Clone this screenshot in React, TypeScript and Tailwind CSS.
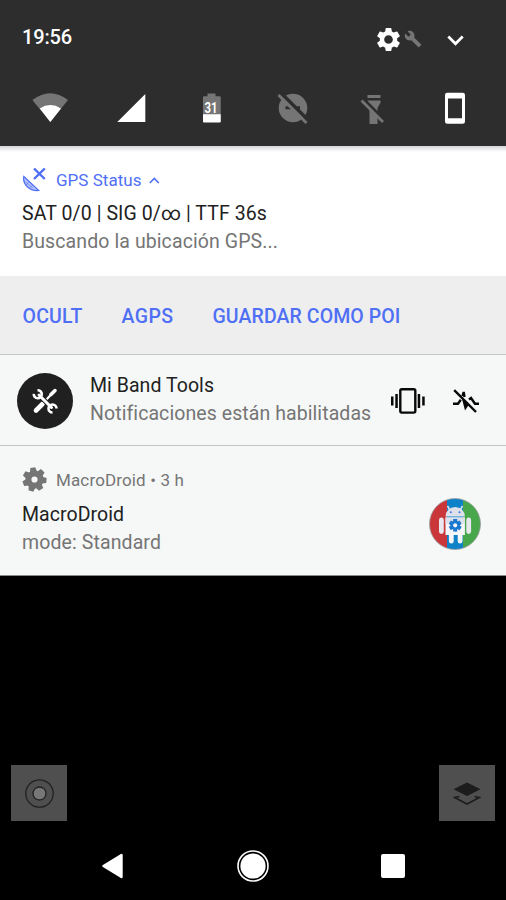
import React from 'react'
import { MdBuild, MdSettings } from 'react-icons/md'

type TextProps = {
    width: number
    size: number
    weight?: number
    children: string
}

// single line label with a fixed advance width
const Line = ({ width, children, size, weight = 400 }: TextProps) => {
    const ref = React.useRef<HTMLSpanElement>(null)
    const [spacing, setSpacing] = React.useState(0)
    React.useLayoutEffect(() => {
        const natural = ref.current!.getBoundingClientRect().width
        setSpacing((width - natural) / children.length)
    }, [width, children])
    return (
        <span
            ref={ref}
            className='inline-block whitespace-nowrap'
            style={{ fontSize: size, fontWeight: weight, letterSpacing: spacing }}
        >
            {children}
        </span>
    )
}

const WifiIcon = () => (
    <svg className='size-9' viewBox='0 0 36 36'>
        <path d='M18.3 32 L.4 10 Q18.3 -3.6 36 10 Z' fill='#757575' />
        <path d='M18.3 32 L7.8 18.4 Q18.3 11.6 29 18.4 Z' fill='#fff' />
    </svg>
)

const SignalIcon = () => (
    <svg className='size-9' viewBox='0 0 36 36'>
        <path d='M4.300 32 L32.300 4 V32 Z' fill='#fff' />
    </svg>
)

const BatteryIcon = () => (
    <svg className='size-9' viewBox='0 0 36 36'>
        <path d='M13.500 3.500h8v2.700h4.200a1 1 0 0 1 1 1V32H9V7.200a1 1 0 0 1 1-1h3.500z' fill='#757575' />
        <path d='M9 24.300h17.700v7.200a1 1 0 0 1-1 1H10a1 1 0 0 1-1-1z' fill='#fff' />
        <text x='17' y='23.300' textAnchor='middle' fill='#fff' fontSize='14.500' fontWeight='700' textLength='13' lengthAdjust='spacingAndGlyphs'>31</text>
    </svg>
)

const DndOffIcon = () => (
    <svg className='size-9' viewBox='0 0 36 36'>
        <circle cx='18' cy='18' r='14.300' fill='#757575' />
        <path d='M10.500 16.300h4l3 3h-7zM21 16.300h4v3h-1.500z' fill='#2d2d2d' />
        <path d='M5.500 2.500L34.500 31.500' stroke='#2d2d2d' strokeWidth='3.500' />
        <path d='M3.500 5L31.500 33' stroke='#757575' strokeWidth='2.800' />
    </svg>
)

const FlashlightOffIcon = () => (
    <svg className='size-9' viewBox='0 0 36 36'>
        <path d='M11.500 5H24.500v3H11.500zM11.500 10.500H24.500v2.200l-3 5.300v16h-8V17z' fill='#757575' />
        <path d='M6.500 8.500L29.500 31.500' stroke='#2d2d2d' strokeWidth='3.500' />
        <path d='M5.500 10.500L27 32' stroke='#757575' strokeWidth='2.600' />
    </svg>
)

const PortraitIcon = () => (
    <svg className='size-9' viewBox='0 0 36 36'>
        <path
            fillRule='evenodd'
            d='M10.300 2.700h15.400a2.300 2.300 0 0 1 2.300 2.300v26.500a2.300 2.300 0 0 1-2.300 2.300H10.300A2.300 2.300 0 0 1 8 31.500V5a2.300 2.300 0 0 1 2.300-2.300zM11 8.500v19.700h14V8.500z'
            fill='#fff'
        />
    </svg>
)

const StatusBar = () => (
    <div className='flex h-[146px] flex-col bg-[#2d2d2d] text-white'>
        <div className='flex h-[78px] items-center pl-[22px]'>
            <div className='flex-1 pb-[3px] leading-6'>
                <Line width={50} size={20} weight={500}>19:56</Line>
            </div>
            <div className='flex items-center pr-[42px]'>
                <MdSettings className='size-[29px]' />
                <MdBuild className='ml-px size-[18px] text-[#757575]' />
                <svg className='mt-[3px] ml-[25px] h-[11px] w-[17px]' viewBox='0 0 17 11' fill='none' stroke='currentColor' strokeWidth='2.800'>
                    <path d='M1.300 1.500L8.500 8.700l7.200-7.200' />
                </svg>
            </div>
        </div>
        <div className='flex justify-between pt-3 pr-[33px] pl-8'>
            <WifiIcon />
            <SignalIcon />
            <BatteryIcon />
            <DndOffIcon />
            <FlashlightOffIcon />
            <PortraitIcon />
        </div>
    </div>
)

const DishIcon = () => (
    <svg className='size-[25px]' viewBox='0 0 25 25' fill='none' stroke='#4f6ff5'>
        <path d='M1.800 8.500C.300 15.500 7 23.500 16.800 22.500z' fill='#b9c5fb' strokeWidth='1.200' />
        <path d='M2 13l9 7M4 17l3-3M7 20.500l3-3' strokeWidth='.6' />
        <path d='M12 .500L22.800 11M22.800 .500L12 11' strokeWidth='2.400' />
    </svg>
)

const GpsNotification = () => (
    <div>
        <div className='h-[130px] bg-linear-to-b from-[#d4d4d8] to-white to-[6px] bg-white pt-5 pl-[22px]'>
            <div className='flex h-[28px] items-center text-[#4f6ff5]'>
                <DishIcon />
                <div className='ml-[9px] leading-5'>
                    <Line width={85.5} size={17}>GPS Status</Line>
                </div>
                <svg className='ml-[7px] h-[7px] w-[11px]' viewBox='0 0 11 7' fill='none' stroke='currentColor' strokeWidth='1.600'>
                    <path d='M.800 6l4.500-4.500L9.800 6' />
                </svg>
            </div>
            <div className='mt-1.5 leading-[27px] text-[#212121]'>
                <Line width={245} size={19.5}>SAT 0/0 | SIG 0/∞ | TTF 36s</Line>
            </div>
            <div className='leading-[27px] text-[#757575]'>
                <Line width={256} size={19.5}>Buscando la ubicación GPS...</Line>
            </div>
        </div>
        <div className='flex h-[78px] items-center gap-[39px] bg-[#eee] pt-[3px] pl-[22.5px] text-[#4f6ff5]'>
            <Line width={60} size={19.5} weight={500}>OCULT</Line>
            <Line width={52} size={19.5} weight={500}>AGPS</Line>
            <Line width={188} size={19.5} weight={500}>GUARDAR COMO POI</Line>
        </div>
    </div>
)

const VibrateIcon = () => (
    <svg className='h-[26px] w-[34px]' viewBox='0 0 34 26'>
        <rect x='9.300' y='1.200' width='15' height='23.400' rx='1.500' fill='none' stroke='#080808' strokeWidth='2.400' />
        <path d='M0 8.500h2.500v9H0zM4.300 6h2.500v14H4.300zM26.700 6h2.500v14h-2.500zM31.200 8.500h2.500v9h-2.500z' fill='#080808' />
    </svg>
)

const PulseOffIcon = () => (
    <svg className='h-6 w-[26px]' viewBox='0 0 26 24' fill='none' stroke='#080808'>
        <path d='M0 14.800h5l2.800-4M9.500 7l1.200-4 .8 5M16 10.500l2-1.500 4 5.800h4' strokeWidth='2.400' />
        <path d='M8.500 8l7.500 7.500L12 21.500z' fill='#080808' stroke='none' />
        <path d='M1.200 1.200L23 23' strokeWidth='2.400' />
    </svg>
)

const ToolsIcon = () => (
    <svg className='size-7' viewBox='0 0 28 28' fill='none' stroke='#fff' strokeLinecap='round'>
        <path d='M14.500 13.500L23 4.500' strokeWidth='2.200' />
        <path d='M20 7.500L24 3.500' strokeWidth='3.500' />
        <path d='M5 23.500L11.500 17' strokeWidth='4.600' />
        <path d='M8.500 8.500L20 20' stroke='#202020' strokeWidth='5' />
        <path d='M8 8L20.500 20.500' strokeWidth='3' />
        <path d='M6.500 3.200A4 4 0 1 1 2.800 6.800M21.500 25.500A4 4 0 1 1 25.500 21.500' strokeWidth='2.600' strokeLinecap='butt' />
    </svg>
)

const BandNotification = () => (
    <div className='flex h-[91px] items-center border-t border-[#c5c5ca] bg-[#f6f8f7] pt-px pl-[17px]'>
        <div className='flex size-14 items-center justify-center rounded-full bg-[#202020]'>
            <ToolsIcon />
        </div>
        <div className='-mt-px ml-[17px] w-[301px]'>
            <div className='leading-[27px] text-[#212121]'>
                <Line width={124} size={19.5}>Mi Band Tools</Line>
            </div>
            <div className='leading-[27px] text-[#757575]'>
                <Line width={280.5} size={19.5}>Notificaciones están habilitadas</Line>
            </div>
        </div>
        <VibrateIcon />
        <div className='ml-7'>
            <PulseOffIcon />
        </div>
    </div>
)

const teeth = [0, 1, 2, 3, 4, 5, 6]

const GearIcon = () => (
    <svg className='size-[25px]' viewBox='0 0 25 25'>
        <g fill='#757575'>
            {teeth.map((tooth) => (
                <path key={tooth} d='M9 5L10 .500h5L16 5z' transform={`rotate(${tooth * 51.43 - 8} 12.500 12.500)`} />
            ))}
        </g>
        <circle cx='12.500' cy='12.500' r='6.100' fill='none' stroke='#757575' strokeWidth='6' />
    </svg>
)

const MacroDroidLogo = () => (
    <svg className='size-[52px]' viewBox='0 0 52 52'>
        <defs>
            <clipPath id='disc'>
                <circle cx='26' cy='26' r='25.500' />
            </clipPath>
        </defs>
        <g clipPath='url(#disc)'>
            <path d='M0 0h18v52H0z' fill='#c9373b' />
            <path d='M18 0h16v52H18z' fill='#0e82c8' />
            <path d='M34 0h18v52H34z' fill='#48a64b' />
        </g>
        <circle cx='26' cy='26' r='25.500' fill='none' stroke='#9d9da0' strokeWidth='.8' />
        <path d='M18.500 8l3 5M33.500 8l-3 5' stroke='#e4e5ed' strokeWidth='1.500' />
        <path d='M16.500 18.500a9.700 9.500 0 0 1 19.400 0z' fill='#dfe1ea' />
        <path d='M16.500 19.500h19.400v17.500H33.500v6.200a2.300 2.300 0 0 1-4.800 0v-6.200h-4v6.200a2.300 2.300 0 0 1-4.800 0v-6.200h-3.400z' fill='#f5f5fa' />
        <path d='M16.500 19.500h19.400v6H16.500z' fill='#dfe1ea' />
        <rect x='10' y='19.500' width='4.800' height='16.500' rx='2.400' fill='#e8e8ee' />
        <rect x='37.300' y='19.500' width='4.800' height='16.500' rx='2.400' fill='#e8e8ee' />
        <circle cx='21.800' cy='14.300' r='1' fill='#4675df' />
        <circle cx='30.500' cy='14.300' r='1' fill='#4675df' />
        <g fill='#1a78cf'>
            {[0, 60, 120, 180, 240, 300].map((angle) => (
                <rect key={angle} x='24.200' y='21' width='4' height='4' transform={`rotate(${angle} 26.200 27.300)`} />
            ))}
        </g>
        <circle cx='26.200' cy='27.300' r='3.400' fill='#f5f5fa' stroke='#1a78cf' strokeWidth='2.600' />
    </svg>
)

const MacroNotification = () => (
    <div className='flex h-[131px] border-y border-t-[#c5c5c5] border-b-[#8a8a8a] bg-[#f6f8f7] pl-[22px]'>
        <div className='w-[407px] pt-[21px]'>
            <div className='flex h-[27px] items-center text-[#757575]'>
                <div className='pb-0.5'>
                    <GearIcon />
                </div>
                <div className='ml-[9px] leading-5'>
                    <Line width={128} size={17}>MacroDroid • 3 h</Line>
                </div>
            </div>
            <div className='mt-[7px] leading-[27px] text-[#212121]'>
                <Line width={102} size={19.5}>MacroDroid</Line>
            </div>
            <div className='leading-[27px] text-[#757575]'>
                <Line width={139} size={19.5}>mode: Standard</Line>
            </div>
        </div>
        <div className='pt-[52px]'>
            <MacroDroidLogo />
        </div>
    </div>
)

const CornerButtons = () => (
    <div className='flex justify-between px-[11px]'>
        <div className='flex size-14 items-center justify-center bg-[#4f4f4f]'>
            <svg className='size-[29px]' viewBox='0 0 29 29' stroke='#222' strokeWidth='1.300'>
                <circle cx='14.500' cy='14.500' r='13.700' fill='none' />
                <circle cx='14.500' cy='14.500' r='6.500' fill='#777' />
            </svg>
        </div>
        <div className='flex size-14 items-center justify-center bg-[#4f4f4f]'>
            <svg className='h-[23px] w-7' viewBox='0 0 28 23'>
                <path d='M14 .500L27.500 7.200 14 14 .500 7.200z' fill='#1c1c1c' />
                <path d='M6.500 14.500L1.500 15.500 14 22l12.500-6.500-5-1' fill='none' stroke='#1c1c1c' strokeWidth='1.600' />
            </svg>
        </div>
    </div>
)

const NavBar = () => (
    <div className='flex items-center justify-between pr-[101px] pl-[102px]'>
        <svg className='h-[26px] w-[22px]' viewBox='0 0 22 26'>
            <path d='M1.500 13L19.500 2v22z' fill='#fff' stroke='#fff' strokeWidth='2.400' strokeLinejoin='round' />
        </svg>
        <svg className='size-8' viewBox='0 0 32 32'>
            <circle cx='16' cy='16' r='15' fill='none' stroke='#fff' strokeWidth='1.600' />
            <circle cx='16' cy='16' r='12.600' fill='#fff' />
        </svg>
        <div className='size-6 rounded-[2px] bg-white' />
    </div>
)

const App = () => {
    return (
        <div className="flex h-[900px] w-[506px] flex-col overflow-hidden bg-black font-['Roboto','Liberation_Sans',sans-serif]">
            <StatusBar />
            <GpsNotification />
            <BandNotification />
            <MacroNotification />
            <div className='flex flex-1 flex-col justify-end pb-[18px]'>
                <CornerButtons />
                <div className='pt-[29px]'>
                    <NavBar />
                </div>
            </div>
        </div>
    )
}

export default App
